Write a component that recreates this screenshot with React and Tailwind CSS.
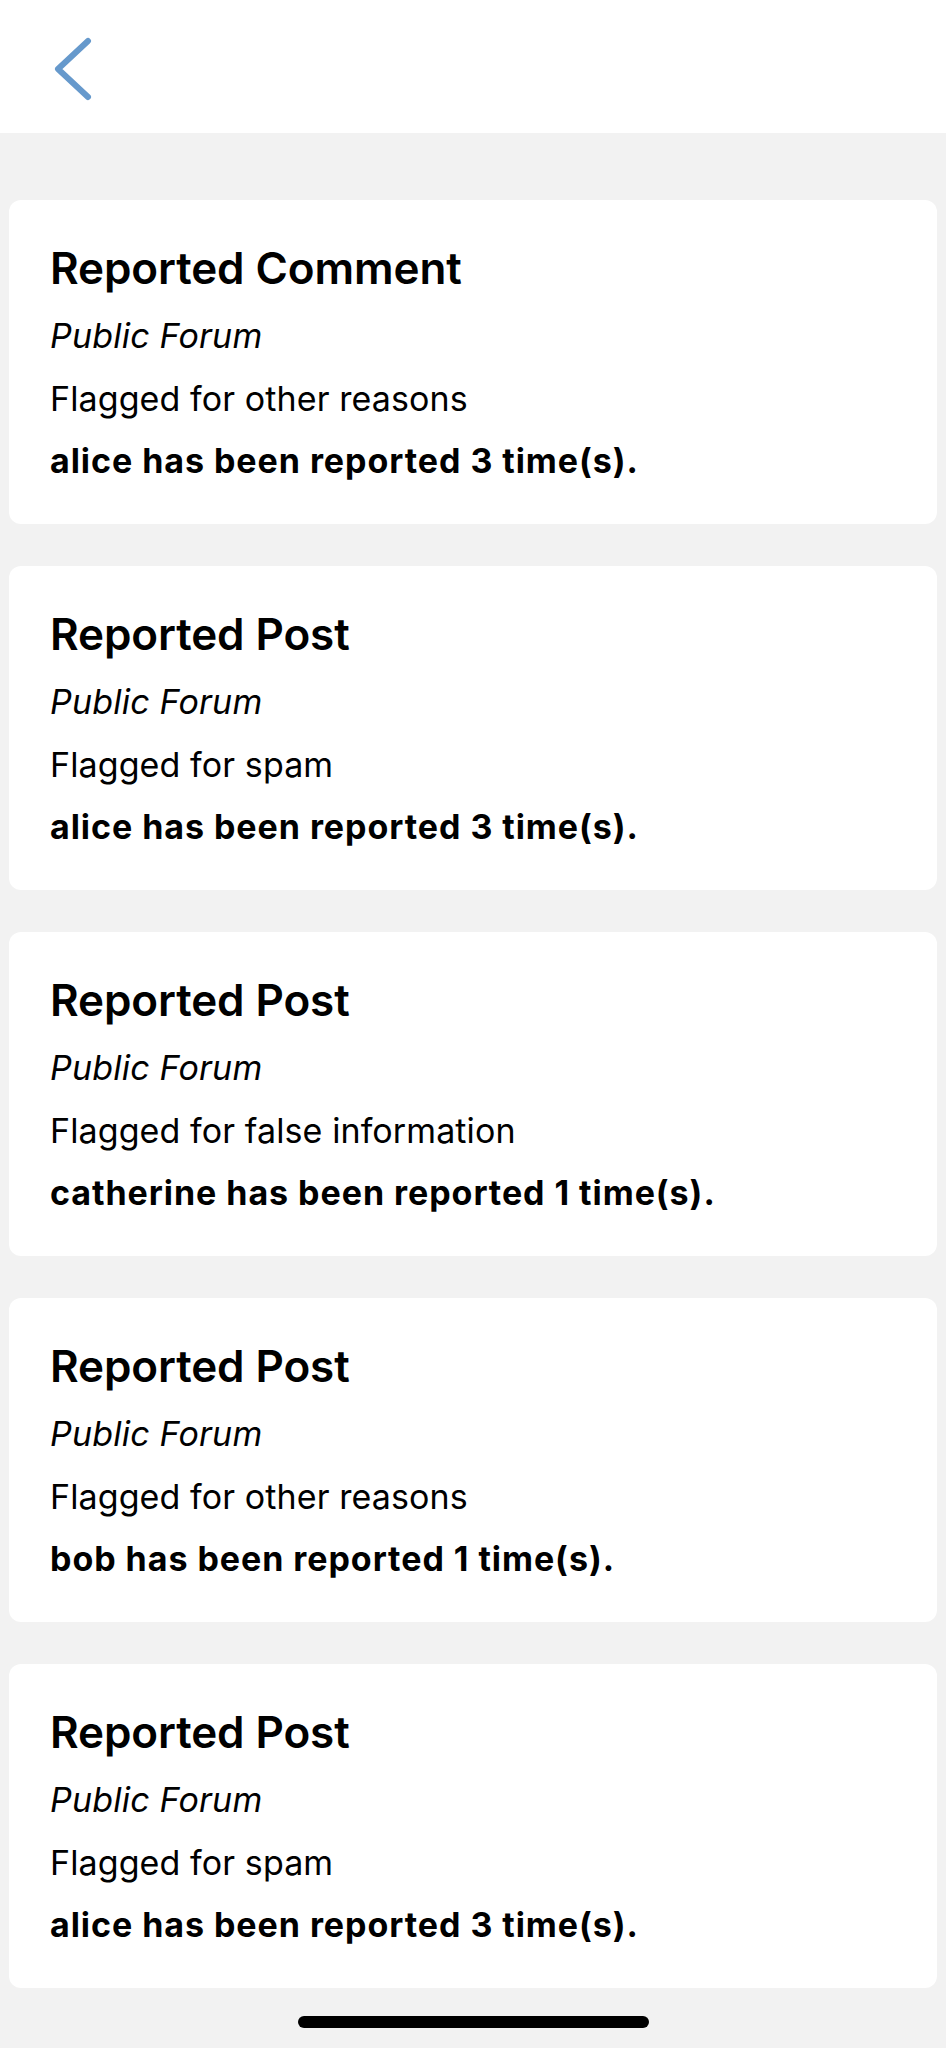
import React from 'react';

const reports = [
  { kind: 'Reported Comment', reason: 'Flagged for other reasons', user: 'alice', count: 3 },
  { kind: 'Reported Post', reason: 'Flagged for spam', user: 'alice', count: 3 },
  { kind: 'Reported Post', reason: 'Flagged for false information', user: 'catherine', count: 1 },
  { kind: 'Reported Post', reason: 'Flagged for other reasons', user: 'bob', count: 1 },
  { kind: 'Reported Post', reason: 'Flagged for spam', user: 'alice', count: 3 },
];

function ReportCard({ report }) {
  return (
    <div className="h-[324px] rounded-[12px] bg-white pl-[41px] pt-[32px] text-black">
      <h2 className="h-[72px] text-[44px] font-semibold leading-[72px] tracking-[-0.1px]">{report.kind}</h2>
      <p className="h-[63px] text-[34px] italic leading-[63px] tracking-[0.2px]">Public Forum</p>
      <p className="h-[63px] text-[34px] leading-[63px] tracking-[0.1px]">{report.reason}</p>
      <p className="h-[61px] text-[34px] font-bold leading-[61px] tracking-[0.95px]">
        {report.user} has been reported {report.count} time(s).
      </p>
    </div>
  );
}

export default function App() {
  return (
    <div className="min-h-screen bg-[#f2f2f2] font-['Inter','Liberation_Sans',sans-serif]">
      {/* шапка с кнопкой назад */}
      <header className="flex h-[133px] items-start bg-white pl-[53px] pt-[37px]">
        <svg width="40" height="64" viewBox="0 0 40 64" fill="none">
          <polyline
            points="35,4 5,32 35,60"
            stroke="#6699cc"
            strokeWidth="6"
            strokeLinecap="round"
            strokeLinejoin="round"
          />
        </svg>
      </header>

      <main className="flex flex-col gap-[42px] px-[9px] pt-[67px]">
        {reports.map((r, i) => (
          <ReportCard key={i} report={r} />
        ))}
      </main>

      {/* home indicator */}
      <div className="flex justify-center pb-[20px] pt-[28px]">
        <div className="h-[12px] w-[351px] rounded-full bg-black" />
      </div>
    </div>
  );
}
